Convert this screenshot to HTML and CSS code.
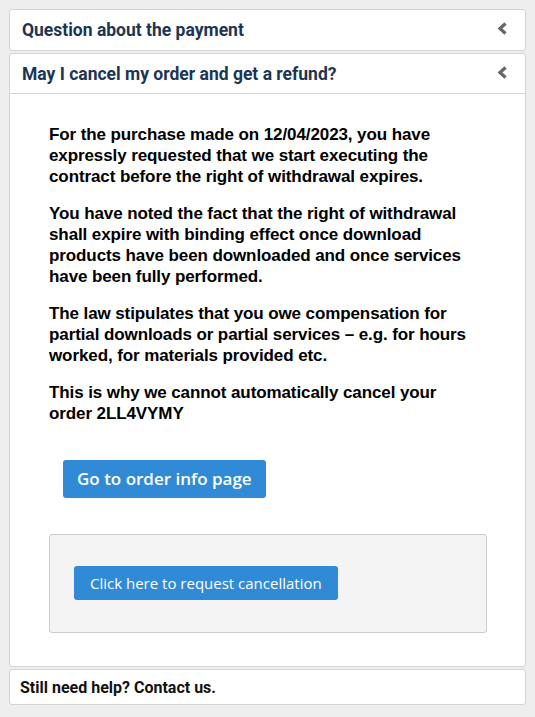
FILE: index.html
```html
<!DOCTYPE html>
<html lang="en">
<head>
<meta charset="UTF-8" />
<meta name="viewport" content="width=device-width, initial-scale=1" />
<title>Help</title>
<link rel="stylesheet" href="styles.css">
</head>
<body>
<div class="panel">
  <div class="panel-head">
    <h3>Question about the payment</h3>
    <svg class="chev" width="11" height="13" viewBox="0 0 11 13"><path d="M8.5 1.5 L3 6.5 L8.5 11.5" fill="none" stroke="#666" stroke-width="3.2"/></svg>
  </div>
</div>

<div class="panel">
  <div class="panel-head open">
    <h3>May I cancel my order and get a refund?</h3>
    <svg class="chev" width="11" height="13" viewBox="0 0 11 13"><path d="M8.5 1.5 L3 6.5 L8.5 11.5" fill="none" stroke="#666" stroke-width="3.2"/></svg>
  </div>
  <div class="panel-body">
    <p>For the purchase made on 12/04/2023, you have expressly requested that we start executing the contract before the right of withdrawal expires.</p>
    <p>You have noted the fact that the right of withdrawal shall expire with binding effect once download products have been downloaded and once services have been fully performed.</p>
    <p>The law stipulates that you owe compensation for partial downloads or partial services – e.g. for hours worked, for materials provided etc.</p>
    <p>This is why we cannot automatically cancel your order 2LL4VYMY</p>

    <a class="btn btn-big" href="#">Go to order info page</a>

    <div class="cancel-box">
      <a class="btn btn-small" href="#">Click here to request cancellation</a>
    </div>
  </div>
</div>

<div class="panel footer">
  <span>Still need help? Contact us.</span>
</div>
</body>
</html>
```

FILE: styles.css
```css
body { margin: 0; padding: 9px 9px 0; background: #eeeeee; font-family: Roboto, "Liberation Sans", sans-serif; }
.panel { background: #fff; border: 1px solid #d4d4d4; border-radius: 3px; margin-bottom: 2px; }
.panel-head { display: flex; align-items: center; justify-content: space-between; height: 40px; padding: 0 17px 0 12px; }
.panel-head.open { border-bottom: 1px solid #d4d4d4; height: 39px; }
.panel-head h3 { margin: 0; font-size: 17.5px; font-weight: 700; color: #1b3552; }
.chev { display: block; margin-top: -3px; }
.panel-body { padding: 30px 38px 33px 39px; }
.panel-body p { margin: 0 0 16px; padding-right: 12px; font-family: "Liberation Sans", Arial, sans-serif; font-size: 17px; font-weight: 700; letter-spacing: -0.1px; line-height: 21px; color: #000; }
.btn { display: inline-block; background: #318ad6; color: #fff; text-decoration: none; border-radius: 3px; font-family: "Open Sans", sans-serif; }
.btn-big { margin: 20px 0 0 14px; padding: 0 14px; height: 38px; line-height: 38px; font-size: 17px; font-weight: 600; vertical-align: top; }
.cancel-box { margin-top: 36px; background: #f4f4f4; border: 1px solid #cccccc; border-radius: 3px; padding: 31px 24px 32px; }
.btn-small { padding: 0 16px; height: 34px; line-height: 34px; font-size: 15px; vertical-align: top; }
.footer { height: 34px; display: flex; align-items: center; padding-left: 10px; }
.footer span { font-size: 16px; font-weight: 700; color: #111; }
```
